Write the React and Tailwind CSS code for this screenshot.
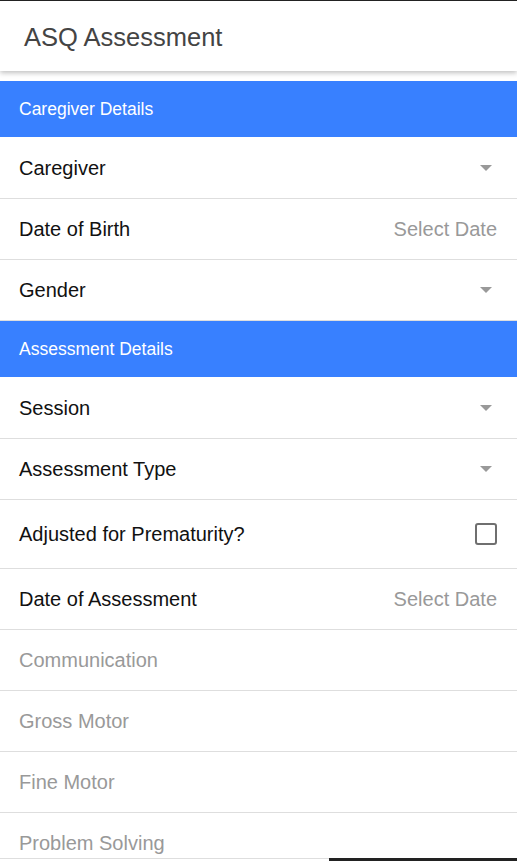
import React from "react";

const Caret = () => (
  <svg width="12" height="6" viewBox="0 0 12 6" className="mr-[5px]">
    <path d="M0 0 L12 0 L6 6 Z" fill="#999999" />
  </svg>
);

const Row = ({ label, right, disabled, h = "h-[61px]", extra = "" }) => (
  <div className={`flex items-center justify-between ${h} ${extra} pl-[19px] pr-[20px] border-b border-[#dedede]`}>
    <span className={`text-[20px] ${disabled ? "text-[#999999]" : "text-[#111111]"}`}>{label}</span>
    {right}
  </div>
);

const Section = ({ title }) => (
  <div className="flex items-center h-[56px] pl-[19px] bg-[#3880ff] text-white text-[17.5px]">
    {title}
  </div>
);

const SelectDate = () => <span className="text-[20px] text-[#999999]">Select Date</span>;

export default function App() {
  return (
    <div
      className="relative w-[517px] h-[861px] overflow-hidden bg-white"
      style={{ fontFamily: '"Liberation Sans", Arial, sans-serif' }}
    >
      <div className="relative z-10 h-[71px] border-t border-[#222222] bg-white flex items-center pl-[24px] pt-[3px] shadow-[0_2px_5px_rgba(0,0,0,0.25)]">
        <span className="text-[25.5px] text-[#444444]">ASQ Assessment</span>
      </div>
      <div className="h-[10px]" />
      <Section title="Caregiver Details" />
      <Row label="Caregiver" right={<Caret />} h="h-[62px]" />
      <Row label="Date of Birth" right={<SelectDate />} />
      <Row label="Gender" right={<Caret />} />
      <Section title="Assessment Details" />
      <Row label="Session" right={<Caret />} h="h-[62px]" />
      <Row label="Assessment Type" right={<Caret />} />
      <Row
        label="Adjusted for Prematurity?"
        h="h-[69px]"
        right={<div className="w-[22px] h-[22px] border-[2.5px] border-[#6f6f6f] rounded-[3px]" />}
      />
      <Row label="Date of Assessment" right={<SelectDate />} />
      <Row label="Communication" disabled />
      <Row label="Gross Motor" disabled />
      <Row label="Fine Motor" disabled />
      <Row label="Problem Solving" disabled h="h-[46px]" extra="pt-[14px]" />
      <div className="absolute left-[329px] right-0 bottom-0 h-[3px] bg-[#222222]" />
    </div>
  );
}
